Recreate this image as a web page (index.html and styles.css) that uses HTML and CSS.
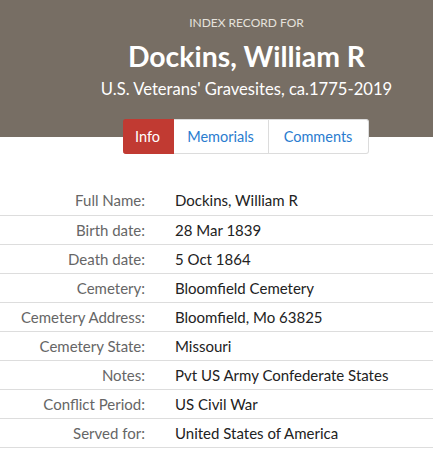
FILE: index.html
```html
<!DOCTYPE html>
<html>
<head>
<meta charset="utf-8">
<link rel="stylesheet" href="styles.css">
</head>
<body>
<header class="hero">
  <div class="eyebrow">INDEX RECORD FOR</div>
  <h1 class="name">Dockins, William R</h1>
  <div class="collection">U.S. Veterans' Gravesites, ca.1775-2019</div>
</header>
<nav class="tabs">
  <a class="tab active">Info</a>
  <a class="tab">Memorials</a>
  <a class="tab">Comments</a>
</nav>
<table class="record">
  <tr><th>Full Name:</th><td>Dockins, William R</td></tr>
  <tr><th>Birth date:</th><td>28 Mar 1839</td></tr>
  <tr><th>Death date:</th><td>5 Oct 1864</td></tr>
  <tr><th>Cemetery:</th><td>Bloomfield Cemetery</td></tr>
  <tr><th>Cemetery Address:</th><td>Bloomfield, Mo 63825</td></tr>
  <tr><th>Cemetery State:</th><td>Missouri</td></tr>
  <tr><th>Notes:</th><td>Pvt US Army Confederate States</td></tr>
  <tr><th>Conflict Period:</th><td>US Civil War</td></tr>
  <tr><th>Served for:</th><td>United States of America</td></tr>
</table>
</body>
</html>
```
FILE: styles.css
```css
* { box-sizing: border-box; }
html { overflow: hidden; }
body {
  margin: 0;
  font-family: Lato, "Noto Sans", sans-serif;
  background: #fff;
  color: #333;
}
.hero {
  background: #776e64;
  color: #fff;
  text-align: center;
  padding: 15px 0 0 60px;
  height: 137px;
}
.eyebrow {
  font-size: 12px;
  color: #e6e2dc;
  line-height: 16px;
}
.name {
  margin: 7px 0 0;
  font-size: 28.4px;
  font-weight: 700;
  line-height: 36px;
}
.collection {
  margin-top: 4px;
  font-size: 16.6px;
  line-height: 22px;
}
.tabs {
  display: flex;
  justify-content: center;
  margin-top: -18px;
  padding-left: 58px;
}
.tab {
  display: block;
  height: 35px;
  line-height: 33px;
  font-size: 14.5px;
  color: #2a7ccf;
  background: #fff;
  border: 1px solid #dcdcdc;
  border-left: none;
  text-align: center;
}
.tab.active {
  background: #c13a32;
  color: #fff;
  border-color: #c13a32;
  width: 51px;
  border-radius: 3px 0 0 3px;
}
.tab:nth-child(2) { width: 95px; }
.tab:nth-child(3) { width: 100px; border-radius: 0 3px 3px 0; }
.record {
  margin-top: 32px;
  width: 100%;
  border-collapse: collapse;
  font-size: 15px;
}
.record tr { border-bottom: 1px solid #ddd; height: 29px; }
.record th {
  width: 160px;
  text-align: right;
  font-weight: 400;
  color: #666;
  padding: 0 15px 0 0;
}
.record td {
  padding: 0 0 0 15px;
  color: #222;
}
```
